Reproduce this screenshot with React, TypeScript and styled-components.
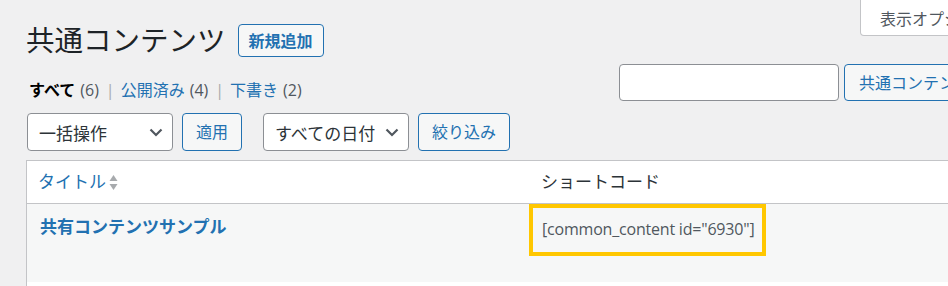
import React from "react";
import styled, { createGlobalStyle } from "styled-components";

const GlobalStyle = createGlobalStyle`
  html, body {
    margin: 0;
    padding: 0;
    background: #f0f0f1;
    overflow: hidden;
  }
  body {
    font-family: "Open Sans", "Noto Sans CJK JP", sans-serif;
    color: #3c434a;
  }
`;

const Page = styled.div`
  width: 1054px;
  box-sizing: border-box;
  padding: 0 20px 0 26px;
  background: #f0f0f1;
  min-height: 286px;
`;

const TopRow = styled.div`
  display: flex;
  justify-content: space-between;
  align-items: flex-start;
`;

const TitleGroup = styled.div`
  display: flex;
  align-items: center;
  margin-top: 24px;
  height: 33px;
`;

const Title = styled.h1`
  margin: 0;
  font-size: 28.5px;
  font-weight: 400;
  line-height: 33px;
  color: #1d2327;
`;

const Button = styled.button<{ $primary?: boolean; $h?: number }>`
  box-sizing: border-box;
  height: ${(p) => p.$h ?? 38}px;
  padding: 0 13px;
  border: 1px solid #2271b1;
  border-radius: 4px;
  background: #f6f7f7;
  color: #2271b1;
  font-family: "Open Sans", "Noto Sans CJK JP", sans-serif;
  font-size: 16px;
  font-weight: ${(p) => (p.$primary ? 700 : 400)};
  line-height: 1;
  white-space: nowrap;
`;

const AddNew = styled(Button)`
  margin-left: 12px;
  padding: 0 10px;
`;

const ScreenTab = styled.div`
  box-sizing: border-box;
  height: 36px;
  display: flex;
  align-items: center;
  gap: 6px;
  padding: 0 21px 0 19px;
  background: #fff;
  border: 1px solid #c3c4c7;
  border-top: none;
  border-radius: 0 0 4px 4px;
  color: #50575e;
  font-size: 16px;
  white-space: nowrap;
`;

const FilterRow = styled.div`
  display: flex;
  justify-content: space-between;
  align-items: flex-start;
  margin-top: 7px;
`;

const Subsubsub = styled.ul`
  display: flex;
  margin: 14px 0 0 3px;
  padding: 0;
  list-style: none;
  font-size: 16px;
  line-height: 24px;
`;

const SubItem = styled.li`
  display: flex;
  gap: 5px;
  & + &::before {
    content: "|";
    color: #a7aaad;
    margin: 0 1px 0 7px;
  }
`;

const SubLink = styled.span<{ $current?: boolean }>`
  color: ${(p) => (p.$current ? "#000" : "#2271b1")};
  font-weight: ${(p) => (p.$current ? 700 : 400)};
`;

const Count = styled.span`
  color: #50575e;
`;

const SearchBox = styled.div`
  display: flex;
  gap: 5px;
  margin-left: auto;
`;

const SearchInput = styled.input`
  box-sizing: border-box;
  width: 220px;
  height: 37px;
  border: 1px solid #8c8f94;
  border-radius: 4px;
  background: #fff;
`;

const SearchButton = styled(Button)`
  padding: 0 14px;
`;

const Tablenav = styled.div`
  display: flex;
  gap: 21px;
  margin: 11px 0 0 1px;
`;

const Actions = styled.div`
  display: flex;
  gap: 9px;
`;

const Select = styled.div<{ $w: number }>`
  box-sizing: border-box;
  width: ${(p) => p.$w}px;
  height: 38px;
  display: flex;
  align-items: center;
  justify-content: space-between;
  padding: 0 9px 0 11px;
  background: #fff;
  border: 1px solid #8c8f94;
  border-radius: 4px;
  color: #2c3338;
  font-size: 17px;
  white-space: nowrap;
`;

const Table = styled.table`
  width: 100%;
  margin-top: 9px;
  border: 1px solid #c3c4c7;
  border-spacing: 0;
  background: #fff;
  table-layout: fixed;
`;

const Th = styled.th<{ $w?: number }>`
  width: ${(p) => (p.$w ? `${p.$w}px` : "auto")};
  box-sizing: border-box;
  padding: 8px 11px;
  border-bottom: 1px solid #c3c4c7;
  text-align: left;
  font-weight: 400;
  font-size: 17px;
  line-height: 26px;
  color: #2c3338;
`;

const SortLink = styled.span`
  display: inline-flex;
  align-items: center;
  gap: 3px;
  color: #2271b1;
`;

const Row = styled.tr<{ $alt?: boolean }>`
  background: ${(p) => (p.$alt ? "#fff" : "#f6f7f7")};
`;

const Td = styled.td<{ $tight?: boolean }>`
  vertical-align: top;
  height: ${(p) => (p.$tight ? "auto" : "78px")};
  box-sizing: border-box;
  padding: ${(p) => (p.$tight ? "0" : "11px 10px 0 13px")};
`;

const RowTitle = styled.span`
  color: #2271b1;
  font-weight: 700;
  font-size: 17px;
  line-height: 24px;
`;

const Shortcode = styled.span`
  display: inline-block;
  margin-left: -1px;
  padding: 9px 8px 11px 9px;
  border: 4px solid #ffc700;
  color: #50575e;
  font-size: 16px;
  line-height: 24px;
  letter-spacing: -0.2px;
`;

const Chevron = () => (
  <svg width="14" height="10" viewBox="0 0 14 10" aria-hidden>
    <path d="M1.5 2.5 7 8l5.5-5.5" fill="none" stroke="#50575e" strokeWidth="2.2" />
  </svg>
);

const TabArrow = () => (
  <svg width="14" height="10" viewBox="0 0 14 10" aria-hidden>
    <path d="M2 3l5 5 5-5z" fill="#787c82" />
  </svg>
);

const SortIcon = () => (
  <svg width="9" height="20" viewBox="0 0 9 20" aria-hidden>
    <path d="M4.5 3 8.5 9h-8z" fill="#a7aaad" />
    <path d="M4.5 18 8.5 12h-8z" fill="#a7aaad" />
  </svg>
);

const counts = [
  { label: "すべて", count: 6, current: true },
  { label: "公開済み", count: 4 },
  { label: "下書き", count: 2 },
];

export default function App() {
  return (
    <>
      <GlobalStyle />
      <Page>
        <TopRow>
          <TitleGroup>
            <Title>共通コンテンツ</Title>
            <AddNew $primary $h={33}>新規追加</AddNew>
          </TitleGroup>
          <ScreenTab>
            表示オプション
            <TabArrow />
          </ScreenTab>
        </TopRow>

        <FilterRow>
          <Subsubsub>
            {counts.map((c) => (
              <SubItem key={c.label}>
                <SubLink $current={c.current}>{c.label}</SubLink>
                <Count>({c.count})</Count>
              </SubItem>
            ))}
          </Subsubsub>
          <SearchBox>
            <SearchInput type="search" />
            <SearchButton $h={37}>共通コンテンツを検索</SearchButton>
          </SearchBox>
        </FilterRow>

        <Tablenav>
          <Actions>
            <Select $w={146}>
              一括操作
              <Chevron />
            </Select>
            <Button>適用</Button>
          </Actions>
          <Actions>
            <Select $w={146}>
              すべての日付
              <Chevron />
            </Select>
            <Button>絞り込み</Button>
          </Actions>
        </Tablenav>

        <Table>
          <thead>
            <tr>
              <Th $w={503}>
                <SortLink>
                  タイトル
                  <SortIcon />
                </SortLink>
              </Th>
              <Th>ショートコード</Th>
            </tr>
          </thead>
          <tbody>
            <Row>
              <Td>
                <RowTitle>共有コンテンツサンプル</RowTitle>
              </Td>
              <Td $tight>
                <Shortcode>[common_content id="6930"]</Shortcode>
              </Td>
            </Row>
            <Row $alt>
              <Td />
              <Td />
            </Row>
          </tbody>
        </Table>
      </Page>
    </>
  );
}
